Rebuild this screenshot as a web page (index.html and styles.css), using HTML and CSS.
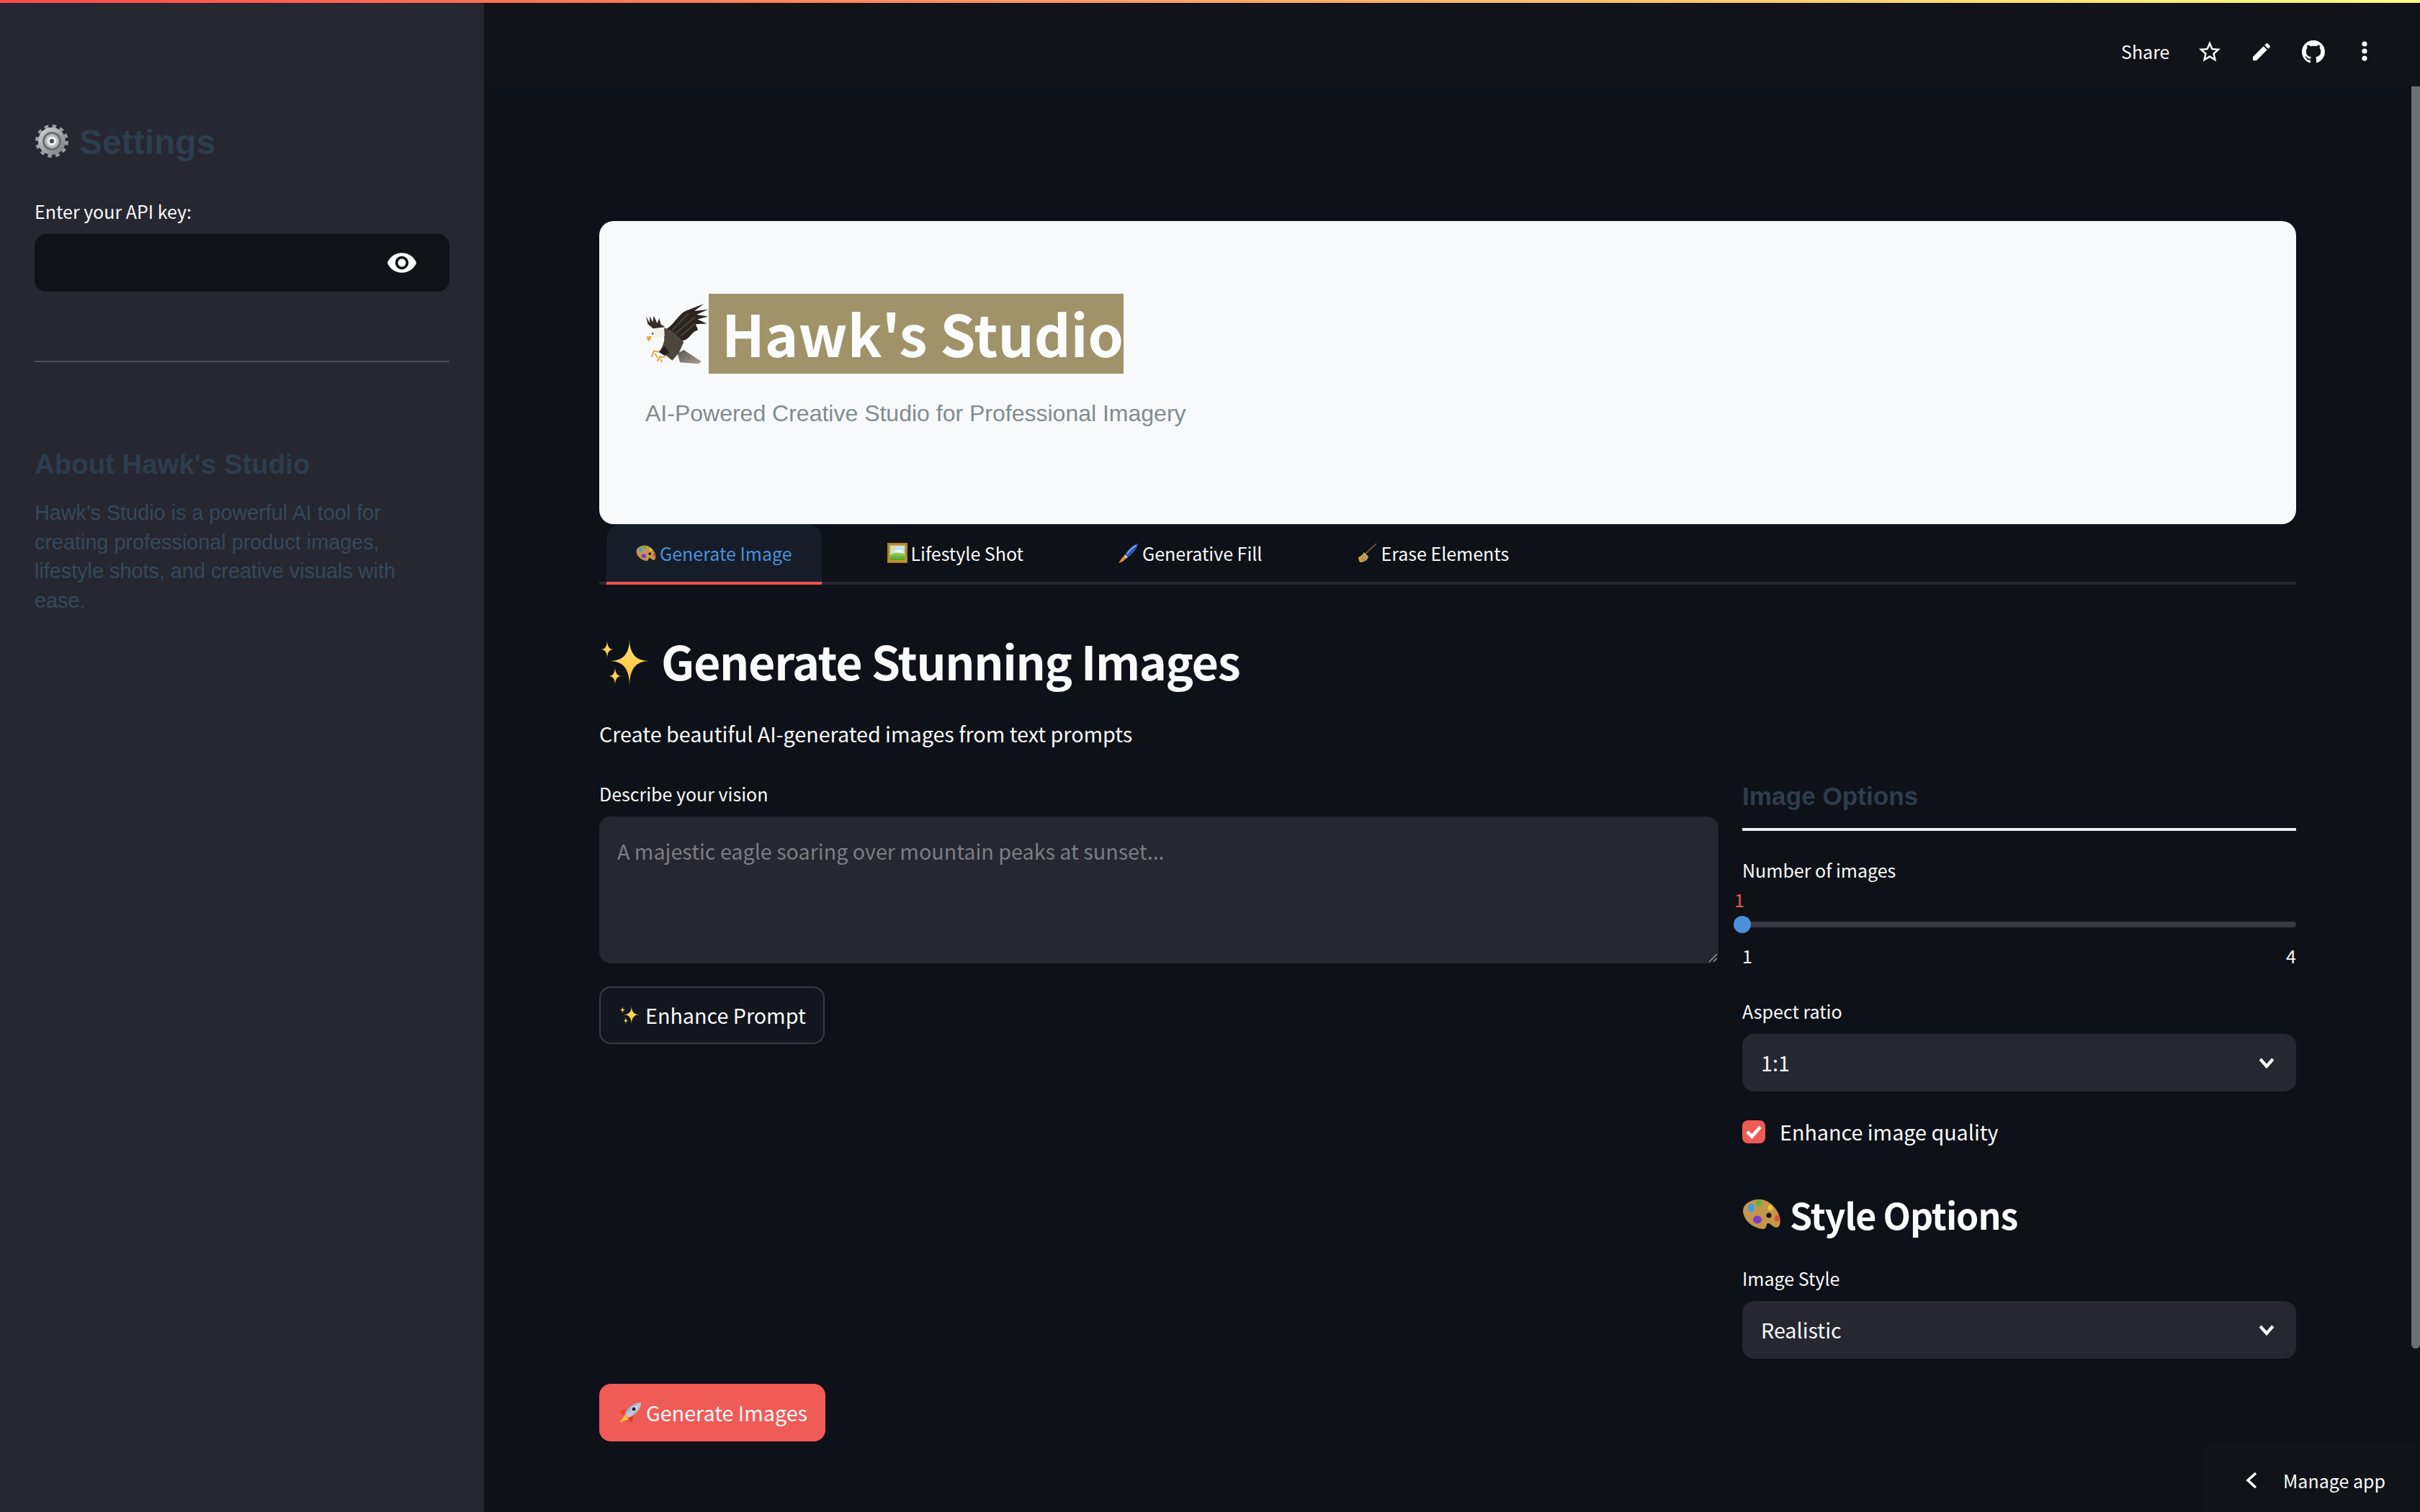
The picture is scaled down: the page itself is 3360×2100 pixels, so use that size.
FILE: index.html
```html
<!DOCTYPE html>
<html lang="en">
<head>
<meta charset="utf-8">
<title>Hawk's Studio</title>
<link rel="stylesheet" href="styles.css">
</head>
<body>
<svg class="defs" width="0" height="0" aria-hidden="true">
  <defs>
    <linearGradient id="spark" x1="0" y1="0" x2="0" y2="1"><stop offset="0" stop-color="#ffe27a"/><stop offset="1" stop-color="#fbc02d"/></linearGradient>
    <linearGradient id="steel" x1="0" y1="0" x2="1" y2="1"><stop offset="0" stop-color="#d8d8da"/><stop offset="1" stop-color="#75767a"/></linearGradient>
    <linearGradient id="hull" x1="0" y1="0" x2="1" y2="1"><stop offset="0" stop-color="#4a86c8"/><stop offset=".55" stop-color="#c9ced6"/><stop offset="1" stop-color="#5a6f8c"/></linearGradient>
    <linearGradient id="tailg" x1="0" y1="0" x2="1" y2="1"><stop offset="0" stop-color="#5d564d"/><stop offset="1" stop-color="#a69e93"/></linearGradient>
    <linearGradient id="grass" x1="0" y1="0" x2="0" y2="1"><stop offset="0" stop-color="#9ed24a"/><stop offset="1" stop-color="#4f9e2c"/></linearGradient>
    <symbol id="sparkles" viewBox="0 0 70 64">
      <path fill="url(#spark)" d="M42 0Q42 30 69 30Q42 30 42 64Q42 30 15 30Q42 30 42 0Z"/>
      <path fill="url(#spark)" d="M11 1Q11 14 20 14Q11 14 11 27Q11 14 2 14Q11 14 11 1Z"/>
      <path fill="url(#spark)" d="M22 38Q22 51 31 51Q22 51 22 64Q22 51 13 51Q22 51 22 38Z"/>
    </symbol>
    <symbol id="palette" viewBox="0 0 54 42">
      <path fill="#c4964c" d="M20 1C32-1 44 8 49 18C54 28 54 38 48 40C42 40 40 34 36 34C32 34 36 42 28 42C14 40 2 30 1 17C1 8 10 2 20 1Z"/>
      <ellipse cx="12.5" cy="12.5" rx="4.5" ry="6" fill="#3f9fe0"/>
      <ellipse cx="23" cy="6" rx="4" ry="4.6" fill="#58b838"/>
      <ellipse cx="39" cy="12.5" rx="3.2" ry="4" fill="#f0c82c"/>
      <ellipse cx="48" cy="27" rx="3" ry="4.4" fill="#e0503c"/>
      <ellipse cx="21" cy="29" rx="6" ry="5.4" fill="#7a3cc0"/>
      <circle cx="37" cy="23" r="3.6" fill="#15120e"/>
    </symbol>
  </defs>
</svg>
<div class="deco"></div>
<div class="app">
  <aside class="sidebar">
    <div class="side-title">
      <svg class="gear" viewBox="0 0 48 48">
        <circle cx="24" cy="24" r="20.5" fill="none" stroke="#9a9b9e" stroke-width="5" stroke-dasharray="5.4 5.33"/>
        <circle cx="24" cy="24" r="19" fill="url(#steel)"/>
        <circle cx="24" cy="24" r="13" fill="#6b6c70"/>
        <circle cx="24" cy="24" r="10" fill="#b9babd"/>
        <circle cx="24" cy="24" r="6.5" fill="#eeeeef"/>
        <circle cx="24" cy="24" r="3" fill="#47484c"/>
      </svg>
      <h1 class="side-h1">Settings</h1>
    </div>
    <label class="label side-label">Enter your API key:</label>
    <div class="side-input">
      <svg class="eye" viewBox="0 0 24 24"><path fill="#fff" d="M12 4.500C7 4.500 2.730 7.610 1 12c1.730 4.390 6 7.500 11 7.500s9.270-3.110 11-7.500c-1.730-4.390-6-7.500-11-7.500zM12 17c-2.760 0-5-2.240-5-5s2.240-5 5-5 5 2.240 5 5-2.240 5-5 5zm0-8c-1.660 0-3 1.340-3 3s1.340 3 3 3 3-1.340 3-3-1.340-3-3-3z"/></svg>
    </div>
    <hr class="side-hr">
    <h2 class="about-h">About Hawk's Studio</h2>
    <p class="about-p">Hawk's Studio is a powerful AI tool for creating professional product images, lifestyle shots, and creative visuals with ease.</p>
  </aside>

  <main class="main">
    <header class="header">
      <span class="share">Share</span>
      <svg class="hicon star" viewBox="0 0 24 24"><path fill="#fff" d="M22 9.240l-7.190-.620L12 2 9.190 8.630 2 9.240l5.460 4.730L5.820 21 12 17.270 18.180 21l-1.630-7.030L22 9.240zM12 15.400l-3.760 2.270 1-4.280-3.320-2.880 4.380-.380L12 6.100l1.710 4.040 4.380.380-3.320 2.880 1 4.280L12 15.400z"/></svg>
      <svg class="hicon pencil" viewBox="0 0 24 24"><path fill="#fff" d="M3 17.250V21h3.750L17.810 9.940l-3.750-3.750L3 17.250zM20.710 7.040c.39-.39.39-1.020 0-1.410l-2.340-2.340c-.39-.39-1.020-.39-1.410 0l-1.830 1.830 3.750 3.750 1.830-1.830z"/></svg>
      <svg class="hicon github" viewBox="0 0 16 16"><path fill="#fff" d="M8 0C3.58 0 0 3.58 0 8c0 3.54 2.29 6.53 5.47 7.59.4.07.55-.17.55-.38 0-.19-.01-.82-.01-1.49-2.01.37-2.53-.49-2.69-.94-.09-.23-.48-.94-.82-1.13-.28-.15-.68-.52-.01-.53.63-.01 1.08.58 1.23.82.72 1.21 1.87.87 2.33.66.07-.52.28-.87.51-1.07-1.78-.2-3.64-.89-3.64-3.95 0-.87.31-1.59.82-2.15-.08-.2-.36-1.02.08-2.12 0 0 .67-.21 2.2.82.64-.18 1.32-.27 2-.27.68 0 1.36.09 2 .27 1.53-1.04 2.2-.82 2.2-.82.44 1.1.16 1.92.08 2.12.51.56.82 1.27.82 2.15 0 3.07-1.87 3.75-3.65 3.95.29.25.54.73.54 1.48 0 1.07-.01 1.93-.01 2.2 0 .21.15.46.55.38A8.013 8.013 0 0016 8c0-4.42-3.58-8-8-8z"/></svg>
      <svg class="hicon kebab" viewBox="0 0 8 32"><circle cx="4" cy="5" r="3.600" fill="#fff"/><circle cx="4" cy="15" r="3.600" fill="#fff"/><circle cx="4" cy="25" r="3.600" fill="#fff"/></svg>
    </header>

    <div class="content">
      <section class="card">
        <div class="card-title">
          <svg class="eagle" viewBox="78 92 264 256">
            <path fill="#372e29" d="M80 148L88 180L110 198L160 192L142 180L136 155L127 176L113 145L109 172L96 147L96 175Z"/>
            <path fill="#2b2420" d="M165 200C190 190 215 140 245 125L322 95L282 125L340 118L292 140L340 148L296 160L335 178L288 180L298 205C270 210 265 245 230 250C215 240 190 225 165 200Z"/>
            <path fill="none" stroke="#5e4e43" stroke-width="4" d="M190 205L258 135M205 218L285 150M222 232L285 178"/>
            <path fill="#4c463e" d="M155 195L190 208L238 255L218 300L190 332L165 312L140 290C155 265 160 240 155 230Z"/>
            <path fill="url(#tailg)" d="M212 302L238 288L312 336L300 346L222 340Z"/>
            <path fill="#f3f1ec" d="M90 225C95 205 120 195 156 195L158 230C140 240 110 238 100 230Z"/>
            <circle cx="108" cy="220" r="3.500" fill="#2a2522"/>
            <path fill="#e6a52c" d="M82 232L104 230L98 245L90 254Z"/>
            <path fill="#241f1c" d="M133 296L158 272L178 298L158 312Z"/>
            <path fill="none" stroke="#dba63f" stroke-width="6" d="M136 296L113 293L104 318M118 304L128 318M163 316L136 318L128 336M140 326L148 338"/>
          </svg>
          <h1 class="brand">Hawk's Studio</h1>
        </div>
        <p class="brand-sub">AI-Powered Creative Studio for Professional Imagery</p>
      </section>

      <nav class="tabs">
        <div class="tab active">
          <svg class="tab-ico" viewBox="0 0 54 42"><use href="#palette"/></svg>
          <span>Generate Image</span>
        </div>
        <div class="tab">
          <svg class="tab-ico" viewBox="0 0 28 28">
            <rect width="28" height="28" fill="#c39a33"/>
            <rect x="1" y="1" width="26" height="26" fill="none" stroke="#8d6c1e" stroke-width="1"/>
            <rect x="4" y="4" width="20" height="20" fill="#c7e3ee"/>
            <circle cx="8" cy="8" r="2.400" fill="#f5dd5a"/>
            <path fill="#eef5f7" d="M12 10h9v4h-12z"/>
            <path fill="url(#grass)" d="M4 17C10 12 18 13 24 16V24H4Z"/>
          </svg>
          <span>Lifestyle Shot</span>
        </div>
        <div class="tab">
          <svg class="tab-ico" viewBox="0 0 28 28">
            <path fill="#2f56b5" d="M27 1C27 7 18 17 13 20L9 16C13 9 22 1 27 1Z"/>
            <path fill="none" stroke="#9db8ee" stroke-width="1.400" d="M24 4C20 6 15 11 12 15"/>
            <path fill="#c9ccd2" d="M9 16L13 20L10 22L7 19Z"/>
            <path fill="#d98b2f" d="M7 19L10 22C7 26 3 27 0 28C2 25 4 21 7 19Z"/>
          </svg>
          <span>Generative Fill</span>
        </div>
        <div class="tab">
          <svg class="tab-ico" viewBox="0 0 28 28">
            <path fill="none" stroke="#7f5f3c" stroke-width="1.600" d="M27 1L12 15"/>
            <path fill="#c8a552" d="M10 13L16 19C15 24 10 27 4 27C3 25 2 22 2 20C5 19 8 16 10 13Z"/>
            <path fill="none" stroke="#8f7232" stroke-width="1" d="M9 18L6 25M12 19L9 26"/>
          </svg>
          <span>Erase Elements</span>
        </div>
      </nav>

      <h2 class="page-h"><svg class="page-spark"><use href="#sparkles"/></svg><span>Generate Stunning Images</span></h2>
      <p class="page-p">Create beautiful AI-generated images from text prompts</p>

      <div class="columns">
        <div class="col-left">
          <label class="label desc-label">Describe your vision</label>
          <div class="textarea">
            <span class="placeholder">A majestic eagle soaring over mountain peaks at sunset...</span>
            <svg class="grip" viewBox="0 0 14 14"><path fill="none" stroke="#9a9ba0" stroke-width="1.400" d="M2 13L13 2M8 13L13 8"/></svg>
          </div>
          <button class="btn btn-ghost"><svg class="btn-ico"><use href="#sparkles"/></svg><span>Enhance Prompt</span></button>
          <button class="btn btn-primary">
            <svg class="btn-ico rocket" viewBox="0 0 32 30">
              <path fill="#e8452c" d="M10 9L1 14L7 19Z"/>
              <path fill="#d83a26" d="M21 19L18 29L12 23Z"/>
              <path fill="#fbc531" d="M9 18L1 29L14 24Z"/>
              <path fill="url(#hull)" d="M31 1C24 1 16 5 11 12L9 18L14 22L20 19C27 14 31 8 31 1Z"/>
              <circle cx="21" cy="10" r="3.800" fill="#d9dde2"/>
              <circle cx="21" cy="10" r="2.500" fill="#20232a"/>
            </svg>
            <span>Generate Images</span>
          </button>
        </div>

        <div class="col-right">
          <h3 class="opt-h">Image Options</h3>
          <div class="opt-rule"></div>
          <label class="label num-label">Number of images</label>
          <div class="slider-val">1</div>
          <div class="track"><span class="thumb"></span></div>
          <div class="ticks"><span>1</span><span>4</span></div>
          <label class="label aspect-label">Aspect ratio</label>
          <div class="select"><span>1:1</span><svg class="chev" viewBox="0 0 24 24"><path fill="none" stroke="#fff" stroke-width="3.400" d="M5 8l7 8 7-8"/></svg></div>
          <div class="check">
            <span class="box"><svg viewBox="0 0 32 32"><path fill="none" stroke="#fff" stroke-width="4.600" d="M7 16l6.500 6.500L25 9"/></svg></span>
            <span>Enhance image quality</span>
          </div>
          <h2 class="style-h"><svg class="style-ico"><use href="#palette"/></svg><span>Style Options</span></h2>
          <label class="label style-label">Image Style</label>
          <div class="select"><span>Realistic</span><svg class="chev" viewBox="0 0 24 24"><path fill="none" stroke="#fff" stroke-width="3.400" d="M5 8l7 8 7-8"/></svg></div>
        </div>
      </div>
    </div>
  </main>
</div>
<div class="scrollbar"></div>
<div class="manage">
  <svg class="manage-chev" viewBox="0 0 16 24"><path fill="none" stroke="#fff" stroke-width="3.600" d="M14 2L3 12l11 10"/></svg>
  <span>Manage app</span>
</div>
</body>
</html>
```
FILE: styles.css
```css
* { box-sizing: border-box; }
html, body { margin: 0; padding: 0; }
body {
  width: 3360px;
  height: 2100px;
  overflow: hidden;
  background: #0e1117;
  color: #fafafa;
  font-family: "Noto Sans CJK SC", "Noto Sans", sans-serif;
  display: flex;
  flex-direction: column;
  position: relative;
}
.defs { position: absolute; }
h1, h2, h3, p { margin: 0; }
.deco { height: 4px; flex: none; background: linear-gradient(90deg, #ff4b4b, #fffd80); }
.app { display: flex; flex: 1; min-height: 0; }

/* Sidebar */
.sidebar { width: 672px; flex: none; background: #262730; padding: 164px 48px 0; display: flex; flex-direction: column; }
.side-title { display: flex; align-items: center; gap: 14px; height: 60px; }
.gear { width: 48px; height: 48px; flex: none; margin-top: -4px; }
.side-h1 { font: 700 48px/60px "Liberation Sans", Arial, sans-serif; color: #2c3e50; }
.label { display: block; font-size: 25px; line-height: 40px; font-weight: 400; color: #fafafa; }
.side-label { margin-top: 45px; }
.side-input { margin-top: 12px; height: 80px; border-radius: 16px; background: #101217; display: flex; align-items: center; justify-content: flex-end; padding-right: 44px; }
.eye { width: 44px; height: 44px; }
.side-hr { margin: 96px 0 0; border: 0; height: 2px; background: #4c4d55; flex: none; }
.about-h { margin-top: 117px; font: 700 38.400px/50px "Liberation Sans", Arial, sans-serif; color: #2c3e50; }
.about-p { margin-top: 22px; font: 400 28.800px/40.600px "Liberation Sans", Arial, sans-serif; color: #34495e; }

/* Main */
.main { flex: 1; min-width: 0; display: flex; flex-direction: column; }
.header { height: 116px; flex: none; background: #111318; display: flex; align-items: flex-start; padding-top: 48px; }
.share { font-size: 25px; line-height: 40px; margin-left: 2273px; margin-top: -1px; }
.hicon { display: block; flex: none; }
.star { width: 36px; height: 36px; margin: 2px 0 0 38px; }
.pencil { width: 32px; height: 32px; margin: 4px 0 0 38px; }
.github { width: 32px; height: 32px; margin: 4px 0 0 40px; }
.kebab { width: 8px; height: 32px; margin: 4px 0 0 51px; }

.content { padding: 187px 172px 0 160px; }
.card { height: 421px; background: #f8f9fa; border-radius: 20px; padding: 101px 0 0 64px; }
.card-title { display: flex; align-items: center; height: 111px; }
.eagle { width: 88px; height: 85px; flex: none; }
.brand { background: #a09369; color: #fbfcfd; font-size: 79px; line-height: 107px; font-weight: 700; padding: 0 0 4px 18px; white-space: nowrap; }
.brand-sub { margin-top: 35px; font: 400 32px/40px "Liberation Sans", Arial, sans-serif; color: #7f8c8d; }

.tabs { display: flex; gap: 50px; height: 84px; padding-left: 10px; border-bottom: 4px solid #262730; }
.tab { height: 84px; padding: 0 41px; border-bottom: 4px solid transparent; border-radius: 20px 20px 0 0; display: flex; align-items: center; gap: 5px; font-size: 25px; flex: none; }
.tab.active { background: #161d29; border-bottom-color: #ef5350; color: #4a90d9; }
.tab-ico { width: 28px; height: 28px; flex: none; }

.page-h { margin-top: 60px; height: 90px; display: flex; align-items: center; gap: 16px; font-size: 64.500px; line-height: 90px; font-weight: 700; letter-spacing: -1.330px; white-space: nowrap; }
.page-spark { width: 70px; height: 64px; flex: none; margin-top: 6px; }
.page-p { margin-top: 35px; font-size: 28.700px; line-height: 44px; }

.columns { margin-top: 40px; display: grid; grid-template-columns: 1554px 769px; column-gap: 33px; }
.col-left { display: flex; flex-direction: column; align-items: flex-start; }
.desc-label { margin-top: 1px; }
.textarea { position: relative; align-self: stretch; margin-top: 12px; height: 204px; border-radius: 16px; background: #262730; padding: 26px 25px; font-size: 28.700px; line-height: 44px; color: #7d7e84; }
.placeholder { display: block; }
.grip { position: absolute; right: 1px; bottom: 1px; width: 14px; height: 14px; }
.btn { display: flex; align-items: center; gap: 8px; height: 80px; width: 314px; padding: 0 0 0 26px; border-radius: 16px; font: 400 28.700px/44px "Noto Sans CJK SC", "Noto Sans", sans-serif; color: #fafafa; white-space: nowrap; }
.btn-ghost { margin-top: 32px; width: 313px; background: #13161e; border: 2px solid #3b3c46; }
.btn-primary { margin-top: 472px; background: #ef5b57; border: 0; padding-left: 27px; }
.btn-ico { width: 28px; height: 28px; flex: none; }
.rocket { width: 32px; height: 30px; }
.btn-primary .rocket { margin-right: -2px; }

.opt-h { font: 700 35.200px/50px "Liberation Sans", Arial, sans-serif; color: #2c3e50; }
.opt-rule { margin-top: 19px; height: 4px; background: #ecf0f1; }
.num-label { margin-top: 34px; }
.slider-val { margin: 3px 0 0 -11px; font-size: 25px; line-height: 36px; color: #ef5350; }
.track { position: relative; margin-top: 13px; height: 8px; border-radius: 4px; background: #383a44; }
.thumb { position: absolute; left: -12px; top: -8px; width: 24px; height: 24px; border-radius: 50%; background: #4a90d9; }
.ticks { margin-top: 21px; margin-bottom: 3px; display: flex; justify-content: space-between; font-size: 25px; line-height: 36px; }
.aspect-label { margin-top: 39px; }
.select { margin-top: 12px; height: 80px; border-radius: 16px; background: #262730; display: flex; align-items: center; justify-content: space-between; padding: 0 26px; font-size: 28.700px; line-height: 44px; }
.chev { width: 30px; height: 30px; flex: none; }
.check { margin-top: 40px; height: 32px; display: flex; align-items: center; gap: 20px; font-size: 28.700px; line-height: 32px; }
.box { width: 32px; height: 32px; border-radius: 8px; background: #ef5b57; flex: none; display: block; }
.box svg { display: block; width: 32px; height: 32px; }
.style-h { margin-top: 63px; height: 70px; display: flex; align-items: center; gap: 12px; font-size: 50px; line-height: 70px; font-weight: 700; letter-spacing: -1px; white-space: nowrap; }
.style-ico { width: 54px; height: 42px; flex: none; }
.style-label { margin-top: 34px; }

/* Overlays */
.scrollbar { position: absolute; top: 120px; right: 0; width: 12px; height: 1753px; border-radius: 0 0 6px 6px; background: #6f7075; }
.manage { position: absolute; right: 0; bottom: 0; width: 300px; height: 95px; background: #111318; display: flex; align-items: center; padding: 7px 0 0 58px; font-size: 25px; gap: 36px; }
.manage-chev { width: 16px; height: 24px; flex: none; }
```
